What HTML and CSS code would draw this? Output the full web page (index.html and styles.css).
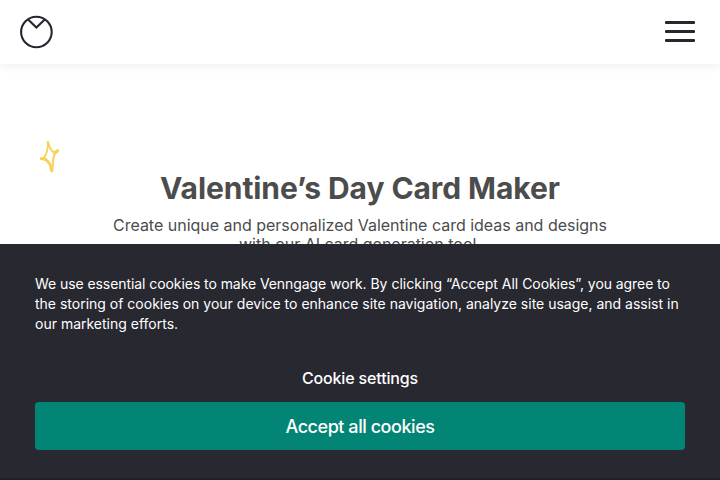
FILE: index.html
```html
<!DOCTYPE html>
<html lang="en">
<head>
  <meta charset="UTF-8">
  <meta name="viewport" content="width=device-width, initial-scale=1.0">
  <title>Valentine's Day Card Maker - Venngage</title>
  <link rel="stylesheet" href="styles.css">
</head>
<body>
  <header class="navbar">
    <a class="logo" href="#" aria-label="Venngage">
      <svg width="34" height="34" viewBox="0 0 34 34" fill="none" stroke="#25262f" stroke-width="2.1">
        <circle cx="17.4" cy="17" r="15.3"/>
        <path d="M8.8 4.3 L17.4 12.6 L26 4.3"/>
      </svg>
    </a>
    <button class="menu-toggle" type="button" aria-label="Menu">
      <span></span>
      <span></span>
      <span></span>
    </button>
  </header>

  <main class="hero">
    <svg class="sparkle" width="22" height="34" viewBox="0 0 22 34" fill="none" stroke="#f9d25c" stroke-linecap="round" stroke-linejoin="round">
      <path stroke-width="2.2" d="M8.8 2 C10 6 12 12 16 12.6 C14 17 14 23 13.2 31.5"/>
      <path stroke-width="3" d="M12.6 30.5 C12 25 9 21 6.5 19.5"/>
      <path stroke-width="1.8" d="M5 17.5 C8 14 9 9 9 3"/>
      <path stroke-width="3.2" d="M2.4 18.6 L6.3 19 M16 13 L18.5 10.8"/>
    </svg>
    <h1>Valentine’s Day Card Maker</h1>
    <p class="subtitle">Create unique and personalized Valentine card ideas and designs with our AI card generation tool.</p>
  </main>

  <div class="cookie-banner">
    <p class="cookie-text"><span class="cookie-lead">We use essential cookies to make Venngage work.</span> By clicking “Accept All <span class="cookie-lead">Cookies”, you agree to</span> the storing of cookies on your device to enhance site navigation, analyze site usage, and assist in our marketing efforts.</p>
    <button class="cookie-settings" type="button">Cookie settings</button>
    <button class="cookie-accept" type="button">Accept all cookies</button>
  </div>
</body>
</html>
```
FILE: styles.css
```css
body {
  font-family: Inter, "Liberation Sans", sans-serif;
  background-color: #fff;
  color: #4c4c4c;
  height: 100vh;
  margin: 0;
  overflow: hidden;
}

button {
  font-family: inherit;
  border: none;
  background: none;
  cursor: pointer;
}

.navbar {
  display: flex;
  align-items: center;
  justify-content: space-between;
  box-sizing: border-box;
  height: 64px;
  padding: 0 25px 0 19px;
  background-color: #fff;
  box-shadow: 0 2px 10px rgba(0, 0, 0, 0.07);
}

.logo {
  display: flex;
}

.menu-toggle {
  display: flex;
  flex-direction: column;
  gap: 6px;
  width: 30px;
  padding: 0 0 2px;
}

.menu-toggle span {
  height: 3px;
  border-radius: 1px;
  background-color: #25262f;
}

.hero {
  padding: 76px 39px 0;
  text-align: center;
}

.sparkle {
  display: block;
}

.hero h1 {
  margin: -6px 0 0;
  font-size: 30px;
  line-height: 40px;
  font-weight: 700;
  letter-spacing: -0.08px;
}

.subtitle {
  max-width: 520px;
  margin: 8px auto 0;
  font-size: 16px;
  line-height: 19px;
  letter-spacing: -0.01px;
}

/* Cookie consent */
.cookie-banner {
  position: fixed;
  left: 0;
  right: 0;
  bottom: 0;
  display: flex;
  flex-direction: column;
  box-sizing: border-box;
  height: 236px;
  padding: 30px 35px 28px;
  background-color: #282830;
  border-bottom: 2px solid #231f28;
  color: #fff;
}

.cookie-text {
  margin: 0 0 32px;
  font-size: 14px;
  line-height: 20px;
}

.cookie-lead {
  letter-spacing: -0.07px;
}

.cookie-settings {
  height: 24px;
  margin-bottom: 12px;
  padding: 0;
  color: #fff;
  font-size: 16px;
  font-weight: 500;
  letter-spacing: -0.15px;
}

.cookie-accept {
  height: 48px;
  padding: 0;
  border-radius: 4px;
  background-color: #038576;
  color: #fff;
  font-size: 18px;
  font-weight: 500;
  letter-spacing: -0.45px;
}
```
